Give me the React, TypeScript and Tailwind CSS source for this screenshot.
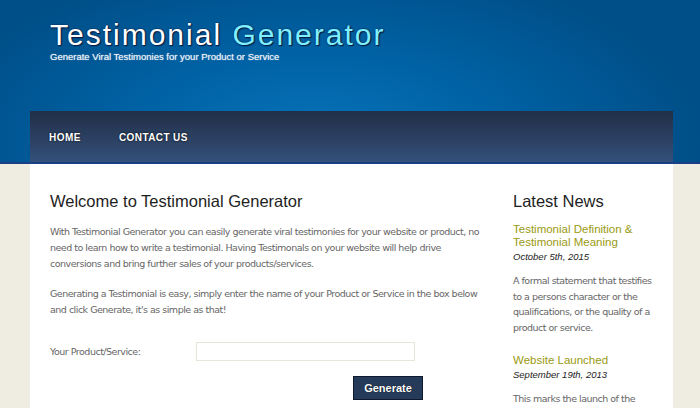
import React from 'react';

const news = [
  {
    title: 'Testimonial Definition & Testimonial Meaning',
    date: 'October 5th, 2015',
    body: 'A formal statement that testifies to a persons character or the qualifications, or the quality of a product or service.',
  },
  {
    title: 'Website Launched',
    date: 'September 19th, 2013',
    body: 'This marks the launch of the Testimonial Generator website.',
  },
];

export default function App() {
  return (
    <div className="min-h-[408px] w-[700px] overflow-hidden bg-[#efede2] font-['Liberation_Sans',Arial,sans-serif]">
      {/* header */}
      <div className="relative h-[164px] border-b-2 border-[#1b3f87] bg-[radial-gradient(ellipse_55%_110%_at_45%_85%,#0a72b8_0%,#0063a6_45%,#004f88_100%)]">
        <div className="px-[50px] pt-[17px]">
          <h1 className="text-[30px] leading-[36px] tracking-[2px] text-white [text-shadow:0_0_2px_#0a1a40,1px_1px_1px_#0a1a40]">
            Testimonial <span className="text-[#7ff0ff]">Generator</span>
          </h1>
          <p className="mt-[-3px] text-[9.5px] text-[#eef3f8] [text-shadow:0_0_1px_#c0d4ea]">
            Generate Viral Testimonies for your Product or Service
          </p>
        </div>
        <nav className="absolute bottom-0 left-[30px] right-[27px] flex h-[51px] items-center gap-[38px] bg-gradient-to-b from-[#212f47] to-[#34507a] px-[19px] pt-[1px]">
          <a className="text-[10px] font-bold tracking-[0.5px] text-white [text-shadow:0_0_2px_#000]">HOME</a>
          <a className="text-[10px] font-bold tracking-[0.4px] text-white [text-shadow:0_0_2px_#000]">CONTACT US</a>
        </nav>
      </div>

      {/* body */}
      <div className="ml-[30px] mr-[27px] flex bg-white pb-8">
        <div className="w-[463px] pl-[20px] pt-[26px]">
          <h2 className="text-[16.5px] leading-[22px] text-[#1e1e1e]">Welcome to Testimonial Generator</h2>
          <div className="mt-[12px] font-['DejaVu_Sans',Tahoma,sans-serif] text-[9.5px] leading-[16px] tracking-[-0.5px] text-[#666]">
            <p>
              With Testimonial Generator you can easily generate viral testimonies for your website or product, no need to learn how to write a testimonial. Having Testimonals on your website will help drive conversions and bring further sales of your products/services.
            </p>
            <p className="mt-[14px]">
              Generating a Testimonial is easy, simply enter the name of your Product or Service in the box below and click Generate, it's as simple as that!
            </p>
            <div className="mt-[24px] flex items-center">
              <label className="w-[146px]">Your Product/Service:</label>
              <input className="h-[19px] w-[219px] border border-[#e8e6d8] bg-white outline-none" />
            </div>
            <div className="mt-[15px] flex pl-[303px]">
              <button className="h-[24px] w-[70px] border border-[#101a2e] bg-[#263a5a] font-['Liberation_Sans',Arial,sans-serif] text-[11px] font-bold tracking-normal text-white [text-shadow:0_0_1px_#000]">
                Generate
              </button>
            </div>
          </div>
        </div>

        <div className="flex-1 pl-[20px] pt-[26px]">
          <h2 className="text-[16.5px] leading-[22px] text-[#1e1e1e]">Latest News</h2>
          {news.map((n, i) => (
            <div key={i} className={i === 0 ? 'mt-[11px]' : 'mt-[18px]'}>
              <h3 className="w-[140px] text-[11.5px] leading-[13px] text-[#9a9a12]">{n.title}</h3>
              <p className="mt-[1px] text-[9.5px] italic leading-[13px] text-[#222]">{n.date}</p>
              <p className="mt-[10px] w-[145px] font-['DejaVu_Sans',Tahoma,sans-serif] text-[9.5px] leading-[15.7px] tracking-[-0.5px] text-[#666]">
                {n.body}
              </p>
            </div>
          ))}
        </div>
      </div>
    </div>
  );
}
